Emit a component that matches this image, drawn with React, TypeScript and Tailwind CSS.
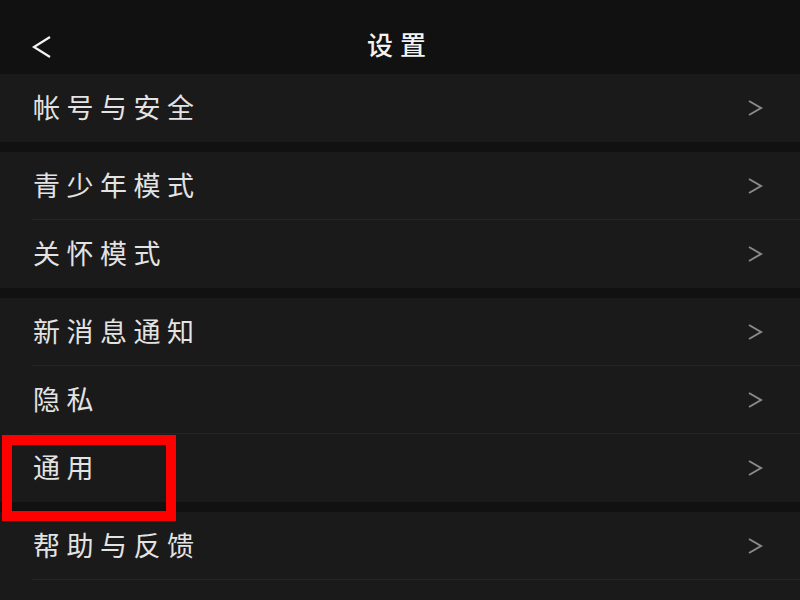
import React from 'react';

const groups: string[][] = [
  ['帐号与安全'],
  ['青少年模式', '关怀模式'],
  ['新消息通知', '隐私', '通用'],
  ['帮助与反馈', ''],
];

const Chevron = () => (
  <svg width="16" height="18" viewBox="0 0 16 18" fill="none" className="shrink-0">
    <polyline points="2,2 14,9 2,16" stroke="#8a8a8a" strokeWidth="2" strokeLinejoin="miter" />
  </svg>
);

const Row = ({ label, last }: { label: string; last: boolean }) => (
  <div className="relative flex h-[68px] items-center justify-between pl-[33px] pr-[37px]">
    <span className="pb-[4px] text-[27px] leading-none tracking-[6.5px] text-[#e3e3e3]">{label}</span>
    {label && <Chevron />}
    {!last && <div className="absolute bottom-0 left-[32px] right-0 h-px bg-[#252525]" />}
  </div>
);

export default function App() {
  return (
    <div
      className="relative h-[600px] w-[800px] overflow-hidden bg-[#111111]"
      style={{ fontFamily: '"Noto Sans CJK SC", "Noto Sans", sans-serif' }}
    >
      <div className="relative flex h-[74px] items-center justify-center">
        <svg width="22" height="24" viewBox="0 0 22 24" fill="none" className="absolute left-[31px] top-[35px]">
          <polyline points="19,2 3,12 19,22" stroke="#f2f2f2" strokeWidth="2.2" />
        </svg>
        <span className="pt-[13px] text-[26px] font-medium tracking-[7px] text-[#f2f2f2]">设置</span>
      </div>
      <div className="flex flex-col gap-[10px]">
        {groups.map((g, i) => (
          <div key={i} className="bg-[#1a1a1a]">
            {g.map((label, j) => (
              <Row key={label || 'empty'} label={label} last={j === g.length - 1 && i !== groups.length - 1} />
            ))}
          </div>
        ))}
      </div>
      <div className="absolute left-[2px] top-[435px] h-[86px] w-[174px] border-[10px] border-[#ff0000]" />
    </div>
  );
}
